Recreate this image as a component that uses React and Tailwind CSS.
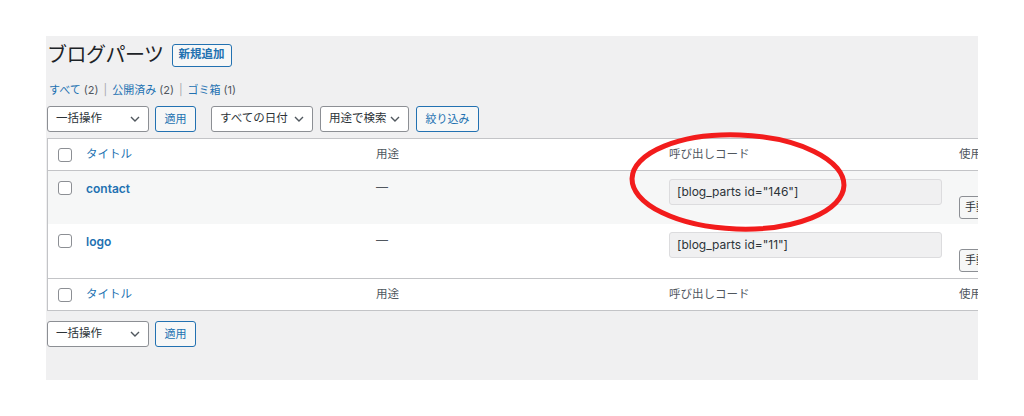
import React from "react";

const font = { fontFamily: 'Inter, "Noto Sans CJK JP", "Noto Sans", sans-serif' };

function Chevron() {
  return (
    <svg width="10" height="6" viewBox="0 0 10 6" className="shrink-0">
      <path d="M1 1l4 4 4-4" fill="none" stroke="#50575e" strokeWidth="1.4" />
    </svg>
  );
}

function Select({ label, w }) {
  return (
    <div className={`h-[26px] ${w} bg-white border border-[#8c8f94] rounded-[3px] flex items-center justify-between pl-[8px] pr-[8px] text-[11.5px] text-[#2c3338]`}>
      <span>{label}</span>
      <Chevron />
    </div>
  );
}

function BlueButton({ label, w }) {
  return (
    <div className={`h-[26px] ${w} bg-[#f6f7f7] border border-[#2271b1] rounded-[3px] flex items-center justify-center text-[11px] text-[#2271b1]`}>
      {label}
    </div>
  );
}

function Checkbox() {
  return <div className="w-[14px] h-[14px] border border-[#8c8f94] rounded-[3px] bg-white" />;
}

function HeaderRow({ bottom }) {
  return (
    <div className={`flex h-[32px] items-center text-[11.5px] ${bottom ? "border-b border-[#c3c4c7]" : "border-t border-[#c3c4c7]"}`}>
      <div className="w-[38px] pl-[10px] flex items-center"><Checkbox /></div>
      <div className="w-[290px] text-[#2271b1]">タイトル</div>
      <div className="w-[293px] text-[#50575e]">用途</div>
      <div className="w-[290px] text-[#50575e]">呼び出しコード</div>
      <div className="text-[#50575e]">使用</div>
    </div>
  );
}

function DataRow({ title, code, bg, h }) {
  return (
    <div className={`flex ${h} ${bg}`}>
      <div className="w-[38px] pl-[10px] pt-[10px]"><Checkbox /></div>
      <div className="w-[290px] pt-[9px] text-[12px] font-semibold text-[#2271b1]">{title}</div>
      <div className="w-[293px] pt-[7px] text-[12px] text-[#50575e]">—</div>
      <div className="w-[290px] pt-[8px]">
        <div className="w-[273px] h-[26px] bg-[#f0f0f1] border border-[#dcdcde] rounded-[3px] flex items-center pl-[7px] text-[12px] text-[#2c3338]">{code}</div>
      </div>
      <div className="pt-[25px]">
        <div className="h-[23px] w-[40px] border border-[#8c8f94] rounded-[3px] bg-[#f6f7f7] flex items-center pl-[5px] text-[11px] text-[#2c3338]">手動</div>
      </div>
    </div>
  );
}

export default function App() {
  return (
    <div className="w-[1024px] h-[416px] bg-white pt-[36px] pl-[46px]" style={font}>
      <div className="w-[932px] h-[344px] bg-[#f0f0f1] overflow-hidden relative pl-[1px]">
        <div className="flex items-center h-[36px] pt-[2px] gap-[8px]">
          <div className="text-[20px] text-[#1d2327] tracking-[-0.5px]">ブログパーツ</div>
          <div className="h-[23px] px-[6px] border border-[#2271b1] rounded-[3px] bg-[#f6f7f7] text-[11.5px] font-semibold text-[#2271b1] flex items-center">新規追加</div>
        </div>
        <div className="flex items-center h-[20px] mt-[8px] text-[11px] text-[#50575e] pl-[2px]">
          <span className="text-[#2271b1]">すべて</span><span className="ml-[3px]">(2)</span>
          <span className="mx-[5px] text-[#a7aaad]">|</span>
          <span className="text-[#2271b1]">公開済み</span><span className="ml-[3px]">(2)</span>
          <span className="mx-[5px] text-[#a7aaad]">|</span>
          <span className="text-[#2271b1]">ゴミ箱</span><span className="ml-[3px]">(1)</span>
        </div>
        <div className="flex items-center mt-[6px] h-[26px]">
          <Select label="一括操作" w="w-[102px]" />
          <div className="ml-[6px]"><BlueButton label="適用" w="w-[41px]" /></div>
          <div className="ml-[15px]"><Select label="すべての日付" w="w-[102px]" /></div>
          <div className="ml-[7px]"><Select label="用途で検索" w="w-[89px]" /></div>
          <div className="ml-[7px]"><BlueButton label="絞り込み" w="w-[63px]" /></div>
        </div>
        <div className="mt-[6px] w-[1000px] bg-white border border-[#c3c4c7]">
          <HeaderRow bottom />
          <DataRow title="contact" code={'[blog_parts id="146"]'} bg="bg-[#f6f7f7]" h="h-[53px]" />
          <DataRow title="logo" code={'[blog_parts id="11"]'} bg="bg-white" h="h-[54px]" />
          <HeaderRow />
        </div>
        <div className="flex items-center mt-[10px] h-[26px]">
          <Select label="一括操作" w="w-[102px]" />
          <div className="ml-[6px]"><BlueButton label="適用" w="w-[41px]" /></div>
        </div>
        <svg className="absolute left-0 top-0 pointer-events-none" width="932" height="344">
          <ellipse cx="692" cy="146" rx="106" ry="47" fill="none" stroke="#f21c1c" strokeWidth="5" transform="rotate(2 692 146)" />
        </svg>
      </div>
    </div>
  );
}
